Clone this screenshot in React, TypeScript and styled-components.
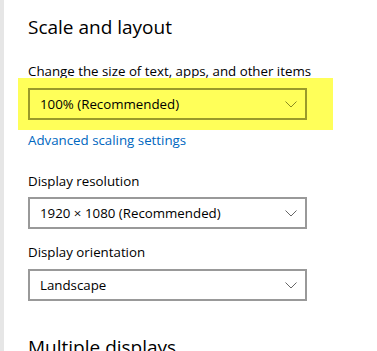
import styled, { createGlobalStyle } from "styled-components";

const GlobalStyle = createGlobalStyle`
  body {
    margin: 0;
    background: #fff;
    font-family: "Open Sans", "Noto Sans", sans-serif;
    color: #000;
  }
`;

const Page = styled.div`
  display: flex;
  height: 351px;
  overflow: hidden;
`;

const SideStrip = styled.div`
  width: 4px;
  background: #e6e6e6;
  flex-shrink: 0;
`;

const Content = styled.div`
  display: flex;
  flex-direction: column;
  align-items: flex-start;
  padding-left: 24px;

  & > * {
    flex-shrink: 0;
  }
`;

const SectionTitle = styled.h2<{ $top: number }>`
  margin: ${(p) => p.$top}px 0 0;
  font-size: 19px;
  font-weight: 400;
  line-height: 28px;
  white-space: nowrap;
`;

const Label = styled.div<{ $top: number }>`
  margin-top: ${(p) => p.$top}px;
  font-size: 13.3px;
  line-height: 20px;
  white-space: nowrap;
`;

const Highlight = styled.div`
  margin: -3px 0 0 -10px;
  padding: 10px 26px 10px 10px;
  background: #ffff59;
`;

const Select = styled.div<{ $marked?: boolean; $top?: number }>`
  box-sizing: border-box;
  width: 279px;
  height: 32px;
  margin-top: ${(p) => p.$top ?? 0}px;
  padding: 0 8px 0 10px;
  display: flex;
  align-items: center;
  justify-content: space-between;
  border: 2px solid ${(p) => (p.$marked ? "#9a9a2a" : "#999999")};
  font-size: 13.3px;
  color: #000;
`;

const Chevron = styled.svg<{ $marked?: boolean }>`
  width: 12px;
  height: 7px;
  stroke: ${(p) => (p.$marked ? "#8a8a20" : "#666666")};
  fill: none;
`;

const Link = styled.a`
  font-size: 13.3px;
  line-height: 20px;
  color: #0067c0;
  text-decoration: none;
  cursor: pointer;
`;

const ChevronDown = ({ marked }: { marked?: boolean }) => (
  <Chevron $marked={marked} viewBox="0 0 12 7">
    <polyline points="0.5,0.5 6,6 11.5,0.5" strokeWidth="1" />
  </Chevron>
);

export default function App() {
  return (
    <>
      <GlobalStyle />
      <Page>
        <SideStrip />
        <Content>
          <SectionTitle $top={13}>Scale and layout</SectionTitle>
          <Label $top={20}>Change the size of text, apps, and other items</Label>
          <Highlight>
            <Select $marked>
              <span>100% (Recommended)</span>
              <ChevronDown marked />
            </Select>
          </Highlight>
          <Link>Advanced scaling settings</Link>
          <Label $top={21}>Display resolution</Label>
          <Select $top={6}>
            <span>1920 × 1080 (Recommended)</span>
            <ChevronDown />
          </Select>
          <Label $top={13}>Display orientation</Label>
          <Select $top={7}>
            <span>Landscape</span>
            <ChevronDown />
          </Select>
          <SectionTitle $top={32}>Multiple displays</SectionTitle>
        </Content>
      </Page>
    </>
  );
}
